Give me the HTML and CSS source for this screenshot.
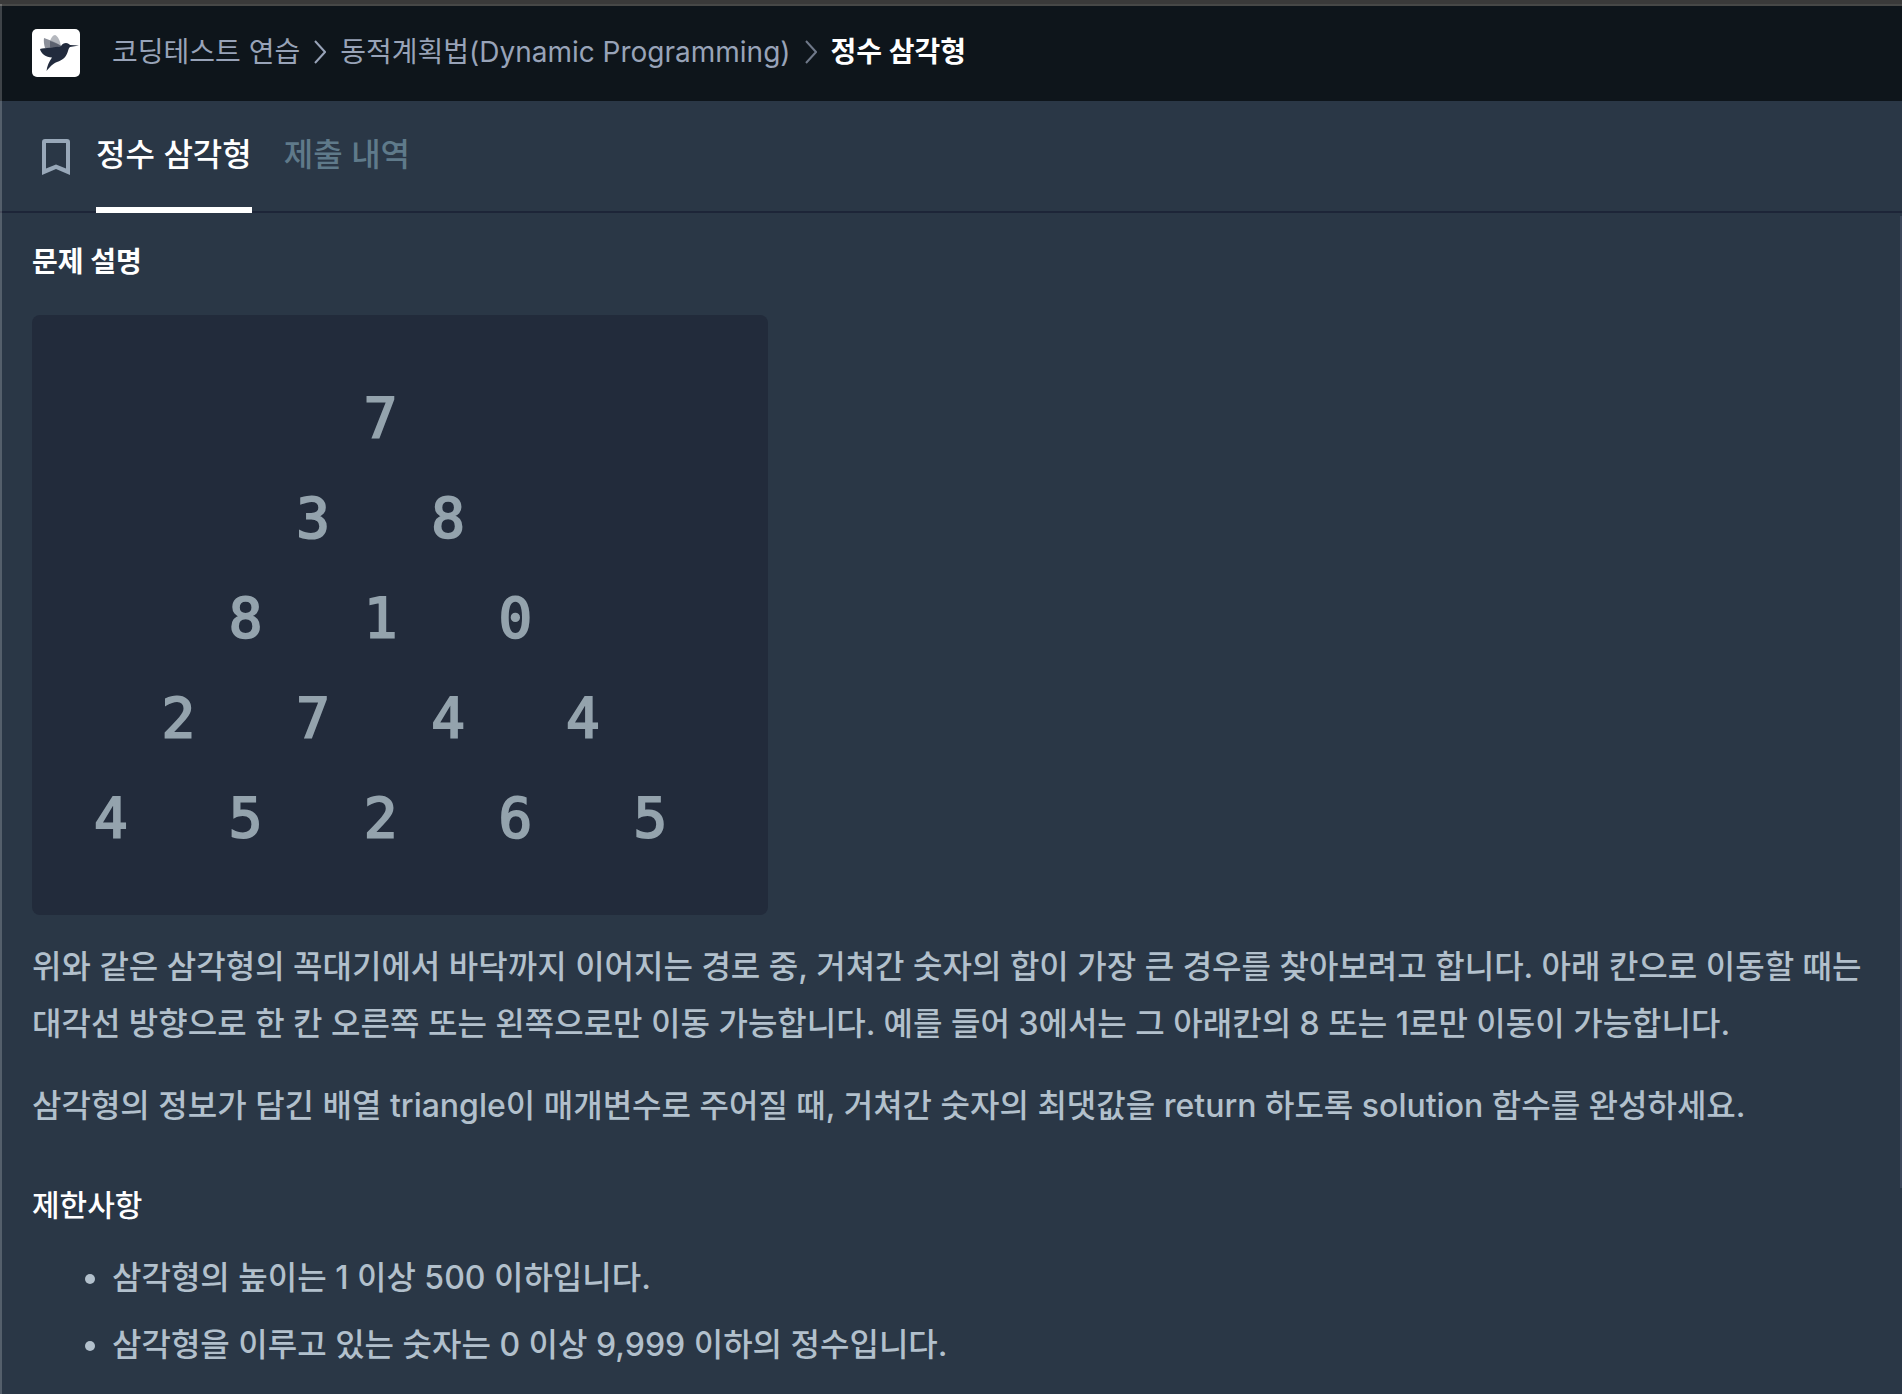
FILE: index.html
```html
<!DOCTYPE html>
<html lang="ko">
<head>
<meta charset="utf-8">
<meta name="viewport" content="width=device-width, initial-scale=1">
<title>정수 삼각형</title>
<link rel="stylesheet" href="styles.css">
</head>
<body>
<header class="header">
  <a class="logo" href="#" aria-label="홈">
    <svg viewBox="0 0 48 48" width="48" height="48" aria-hidden="true">
      <path fill="#b4b7bd" d="M18 12C19 9 21 6 23 6C26 7 28 12 29 17L22 18Z"/>
      <path fill="#8b8f99" d="M12 9C17 11 24 13 29 17L22 19L13 19C12 15 11.500 12 12 9Z"/>
      <path fill="#5d626f" d="M18 12C22 13 26 15 29 17L22 19L18 18.500Z"/>
      <path fill="#222b3d" d="M8 20C13 18.500 22 19 29 17C30 15 32 14 34 14C36 14 37 15 38 16L47 16.500L38 18C36.500 19 36.500 21 35.500 23.500C34 28 31 31 25 33C20 35 18 38 14.500 42C15 37 17 33 20 28.500C14 28 9 25 8 20Z"/>
    </svg>
  </a>
  <nav class="breadcrumb" aria-label="위치">
    <a href="#">코딩테스트 연습</a>
    <svg class="chevron" viewBox="0 0 12 24" width="12" height="24" aria-hidden="true"><path d="M1 1L11 12L1 23"/></svg>
    <a href="#">동적계획법(Dynamic Programming)</a>
    <svg class="chevron chevron-thin" viewBox="0 0 12 24" width="12" height="24" aria-hidden="true"><path d="M1 1L11 12L1 23"/></svg>
    <span class="current">정수 삼각형</span>
  </nav>
</header>
<nav class="tabs">
  <button class="bookmark" type="button" aria-label="북마크">
    <svg viewBox="0 0 28 36" width="28" height="36" aria-hidden="true"><path fill="currentColor" fill-rule="evenodd" d="M3 0H25Q28 0 28 3V36L14 30L0 36V3Q0 0 3 0ZM4 4V29.500L14 25.500L24 29.500V4Z"/></svg>
  </button>
  <a class="tab tab-active" href="#">정수 삼각형</a>
  <a class="tab" href="#">제출 내역</a>
</nav>
<main class="content">
  <h1 class="title">문제 설명</h1>
<pre class="triangle">
        7
      3   8
    8   1   0
  2   7   4   4
4   5   2   6   5</pre>
  <p class="text">위와 같은 삼각형의 꼭대기에서 바닥까지 이어지는 경로 중, 거쳐간 숫자의 합이 가장 큰 경우를 찾아보려고 합니다. 아래 칸으로 이동할 때는 대각선 방향으로 한 칸 오른쪽 또는 왼쪽으로만 이동 가능합니다. 예를 들어 3에서는 그 아래칸의 8 또는 1로만 이동이 가능합니다.</p>
  <p class="text">삼각형의 정보가 담긴 배열 triangle이 매개변수로 주어질 때, 거쳐간 숫자의 최댓값을 return 하도록 solution 함수를 완성하세요.</p>
  <h2 class="subtitle">제한사항</h2>
  <ul class="rules">
    <li>삼각형의 높이는 1 이상 500 이하입니다.</li>
    <li>삼각형을 이루고 있는 숫자는 0 이상 9,999 이하의 정수입니다.</li>
  </ul>
</main>
<div class="scrollbar"></div>
</body>
</html>
```
FILE: styles.css
```css
* {
  box-sizing: border-box;
}

body {
  position: relative;
  min-height: 100vh;
  margin: 0;
  border-top: 4px solid #3a3a3a;
  background: #2a3746;
  color: #b2c0cc;
  font-family: Inter, "Noto Sans CJK KR", sans-serif;
  font-size: 32px;
  font-weight: 500;
  line-height: 57px;
  word-break: keep-all;
}

/* Light window edge along the left side */
body::before {
  content: "";
  position: absolute;
  top: 0;
  bottom: 0;
  left: 0;
  width: 2px;
  background: rgba(255, 255, 255, 0.2);
}

a {
  color: inherit;
  text-decoration: none;
}

.header {
  display: flex;
  align-items: center;
  gap: 32px;
  height: 97px;
  padding: 0 32px 1px;
  border-top: 2px solid #474847;
  background: #0e151b;
}

.logo {
  display: flex;
  flex: none;
  border-radius: 5px;
  background: #fff;
}

.breadcrumb {
  display: flex;
  align-items: center;
  gap: 14px;
  padding-bottom: 2px;
  color: #98a3b8;
  font-size: 28px;
  font-weight: 400;
  line-height: 40px;
  white-space: nowrap;
}

.chevron {
  fill: none;
  stroke: currentColor;
  stroke-width: 2;
}

.chevron-thin {
  opacity: 0.7;
}

.current {
  color: #fff;
  font-weight: 700;
}

.tabs {
  display: flex;
  height: 112px;
  padding: 0 32px;
  border-bottom: 2px solid #1d2538;
}

.bookmark {
  display: flex;
  align-items: center;
  margin-right: 16px;
  padding: 2px 10px 0;
  border: 0;
  background: none;
  color: #98a8b9;
}

.tab {
  height: 112px;
  margin-right: 32px;
  color: #5f7a8a;
  line-height: 108px;
  white-space: nowrap;
}

.tab-active {
  border-bottom: 6px solid #fff;
  color: #fff;
}

.content {
  padding: 25px 32px 0;
}

.title,
.subtitle {
  margin: 0;
  color: #fff;
  line-height: 48px;
}

.title {
  font-size: 28px;
  font-weight: 700;
}

.subtitle {
  margin-top: 47px;
  font-size: 30px;
  font-weight: 500;
}

.triangle {
  width: fit-content;
  min-width: 736px;
  margin: 29px 0 23px;
  padding: 53px 62px 47px;
  border-radius: 8px;
  background: #222b3b;
  color: #94a3ad;
  font: 400 56px/100px "DejaVu Sans Mono", monospace;
  -webkit-text-stroke: 2px #94a3ad;
}

.text {
  margin: 0 0 25px;
}

.rules {
  margin: 20px 0 0;
  padding-left: 80px;
}

.rules li + li {
  margin-top: 10px;
}

.scrollbar {
  position: absolute;
  top: 212px;
  right: 0;
  width: 2px;
  height: 972px;
  background: #3c475a;
}
```
